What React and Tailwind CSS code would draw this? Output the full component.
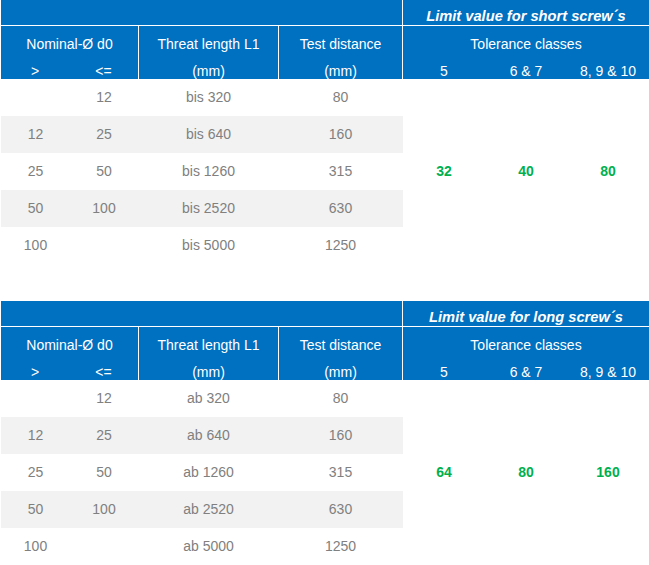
const font = { fontFamily: '"Liberation Sans", Arial, sans-serif' };

const tables = [
  {
    title: 'Limit value for short screw´s',
    prefix: 'bis',
    limits: ['32', '40', '80'],
  },
  {
    title: 'Limit value for long screw´s',
    prefix: 'ab',
    limits: ['64', '80', '160'],
  },
];

const rows = [
  ['', '12', '320', '80'],
  ['12', '25', '640', '160'],
  ['25', '50', '1260', '315'],
  ['50', '100', '2520', '630'],
  ['100', '', '5000', '1250'],
];

function HeaderCell({ top, bottom, className = '' }) {
  return (
    <div className={`flex h-[53px] flex-col overflow-hidden bg-[#0070c0] pt-[5px] text-center text-white ${className}`}>
      <div className="leading-[27px]">{top}</div>
      <div className="leading-[27px]">{bottom}</div>
    </div>
  );
}

function ScrewTable({ title, prefix, limits }) {
  return (
    <div className="w-[649px] text-[14px]">
      {/* title row */}
      <div className="flex h-[25px] gap-px pl-px">
        <div className="w-[401px] bg-[#0070c0]" />
        <div className="w-[246px] overflow-hidden bg-[#0070c0] pt-[8px] text-center text-[14.67px] font-bold italic leading-[17px] text-white">
          {title}
        </div>
      </div>

      {/* column headings */}
      <div className="mt-px flex gap-px pl-px">
        <HeaderCell
          className="w-[137px]"
          top="Nominal-Ø d0"
          bottom={
            <div className="grid grid-cols-[68px_69px]">
              <span>&gt;</span>
              <span>&lt;=</span>
            </div>
          }
        />
        <HeaderCell className="w-[139px]" top="Threat length L1" bottom="(mm)" />
        <HeaderCell className="w-[123px]" top="Test distance" bottom="(mm)" />
        <HeaderCell
          className="w-[246px]"
          top="Tolerance classes"
          bottom={
            <div className="grid grid-cols-3">
              <span>5</span>
              <span>6 &amp; 7</span>
              <span>8, 9 &amp; 10</span>
            </div>
          }
        />
      </div>

      {/* data */}
      <div className="flex">
        <div className="w-[403px] text-[#808080]">
          {rows.map((r, i) => (
            <div
              key={i}
              className={`ml-px grid h-[37px] grid-cols-[69px_68px_140px_124px] items-center text-center ${
                i % 2 === 1 ? 'bg-[#f2f2f2]' : 'bg-white'
              }`}
            >
              <span>{r[0]}</span>
              <span>{r[1]}</span>
              <span className="pl-px">{prefix} {r[2]}</span>
              <span className="pl-px">{r[3]}</span>
            </div>
          ))}
        </div>
        <div className="grid w-[246px] grid-cols-3 items-center text-center font-bold text-[#00b050]">
          {limits.map((v) => (
            <span key={v}>{v}</span>
          ))}
        </div>
      </div>
    </div>
  );
}

export default function App() {
  return (
    <div className="h-[565px] w-[649px] overflow-hidden bg-white" style={font}>
      <ScrewTable {...tables[0]} />
      <div className="h-[37px]" />
      <ScrewTable {...tables[1]} />
    </div>
  );
}
